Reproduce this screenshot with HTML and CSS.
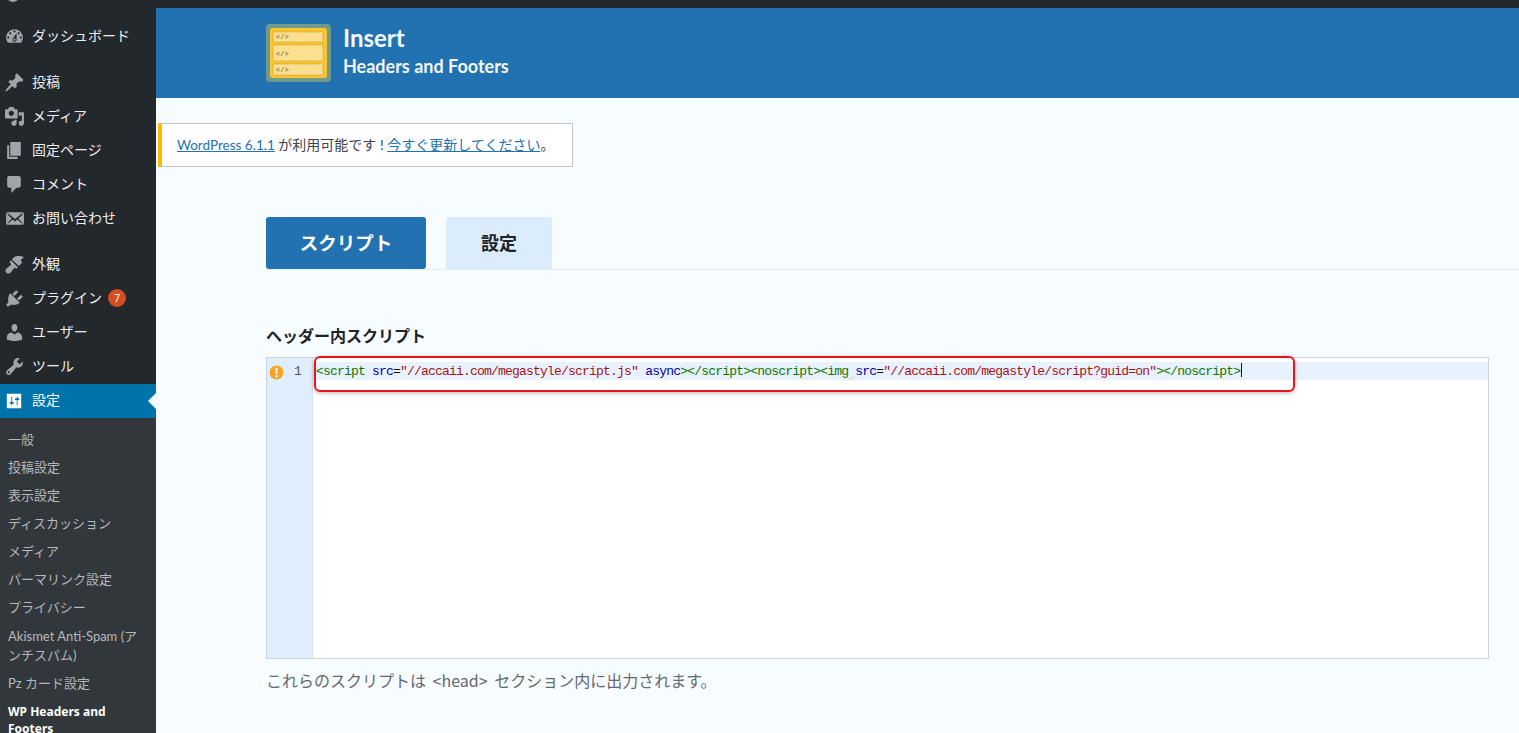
FILE: index.html
```html
<!DOCTYPE html>
<html lang="ja">
<head>
<meta charset="utf-8">
<title>Insert Headers and Footers</title>
<link rel="stylesheet" href="styles.css">
</head>
<body>
<div class="topbar"><span class="top-icon"></span></div>
<div class="shell">
  <nav class="sidebar">
    <ul class="menu first">
      <li class="item"><svg class="ico" viewBox="0 0 20 20"><path fill-rule="evenodd" d="M3.760 16h12.480c1.100-1.370 1.760-3.110 1.760-5 0-4.420-3.580-8-8-8s-8 3.580-8 8c0 1.890.66 3.630 1.760 5zM10 4c.55 0 1 .45 1 1s-.45 1-1 1-1-.45-1-1 .45-1 1-1zM6 6c.55 0 1 .45 1 1s-.45 1-1 1-1-.45-1-1 .45-1 1-1zm8 0c.55 0 1 .45 1 1s-.45 1-1 1-1-.45-1-1 .45-1 1-1zm-5.370 5.550L12 7v6c0 1.100-.9 2-2 2s-2-.9-2-2c0-.57.24-1.080.63-1.450zM4 10c.55 0 1 .45 1 1s-.45 1-1 1-1-.45-1-1 .45-1 1-1zm12 0c.55 0 1 .45 1 1s-.45 1-1 1-1-.45-1-1 .45-1 1-1zm-5 3c0-.55-.45-1-1-1s-1 .45-1 1 .45 1 1 1 1-.45 1-1z"/></svg><span>ダッシュボード</span></li>
    </ul>
    <ul class="menu">
      <li class="item"><svg class="ico" viewBox="0 0 20 20"><path d="M10.440 3.020l1.820-1.820 6.360 6.350-1.830 1.820c-1.050-.68-2.480-.57-3.410.36l-.75.75c-.92.93-1.040 2.350-.35 3.410l-1.830 1.820-2.410-2.410-2.800 2.790c-.42.42-3.380 2.710-3.800 2.290s1.860-3.390 2.280-3.810l2.790-2.790L4.100 9.360l1.830-1.820c1.050.69 2.480.57 3.400-.36l.75-.75c.93-.92 1.050-2.350.36-3.410z"/></svg><span>投稿</span></li>
      <li class="item"><svg class="ico" viewBox="0 0 20 20"><path d="M13 11V4c0-.55-.45-1-1-1h-1.670L9 1H5L3.670 3H2c-.55 0-1 .45-1 1v7c0 .55.45 1 1 1h10c.55 0 1-.45 1-1zM7 4.500c1.380 0 2.500 1.120 2.500 2.500S8.380 9.500 7 9.500 4.500 8.380 4.500 7 5.620 4.500 7 4.500zM14 6h5v10.500c0 1.380-1.120 2.500-2.500 2.500S14 17.880 14 16.500s1.120-2.500 2.500-2.500c.17 0 .34.020.5.050V9h-3V6zm-4 8.050V13h2v3.500c0 1.380-1.120 2.500-2.500 2.500S7 17.880 7 16.500 8.120 14 9.500 14c.17 0 .34.020.5.050z"/></svg><span>メディア</span></li>
      <li class="item"><svg class="ico" viewBox="0 0 20 20"><path d="M6 15V2h10v13H6zm-1 1h8v2H3V5h2v11z"/></svg><span>固定ページ</span></li>
      <li class="item"><svg class="ico" viewBox="0 0 20 20"><path d="M5 2h9c1.100 0 2 .9 2 2v7c0 1.100-.9 2-2 2h-2l-5 5v-5H5c-1.100 0-2-.9-2-2V4c0-1.100.9-2 2-2z"/></svg><span>コメント</span></li>
      <li class="item"><svg class="ico" viewBox="0 0 20 20"><path d="M19 14.500v-9c0-.83-.67-1.500-1.500-1.500H3.490c-.83 0-1.500.67-1.500 1.500v9c0 .83.67 1.500 1.500 1.500H17.500c.83 0 1.500-.67 1.500-1.500zm-1.310-9.110c.33.33.15.67-.03.84L13.600 9.950l3.900 4.060c.12.14.2.36.06.51-.13.16-.43.15-.56.050l-4.370-3.730-2.140 1.950-2.130-1.950-4.370 3.730c-.13.100-.43.110-.56-.050-.14-.15-.06-.37.06-.51l3.900-4.060-4.060-3.720c-.18-.17-.36-.51-.03-.84s.67-.17.95.070l6.240 5.040 6.250-5.040c.28-.24.62-.4.95-.07z"/></svg><span>お問い合わせ</span></li>
    </ul>
    <ul class="menu last">
      <li class="item"><svg class="ico" viewBox="0 0 20 20"><path d="M12.500 2c2.300-.3 4.800 0 6.500 1l-3 2.800 1.200 2.500-3 3.200L7.500 5.200 9 3.600C10 2.700 11.200 2.200 12.500 2z"/><path d="M6.700 6l6.600 6.600-1.600 1.500-1.600-1.200-3.600 4.700c-1 1.200-2.800 1.400-4 .5C1.100 17 1 15 2.200 14L7 10 5.200 7.600z"/></svg><span>外観</span></li>
      <li class="item"><svg class="ico" viewBox="0 0 20 20"><path d="M13.110 4.360L9.870 7.600 8 5.730l3.240-3.240c.35-.34 1.050-.2 1.560.32.52.51.66 1.210.31 1.550zm-8 1.770l.91-1.120 9.010 9.010-1.190.84c-.71.71-2.630 1.160-3.820 1.160H6.140L4.900 17.260c-.59.59-1.540.59-2.120 0-.59-.58-.59-1.530 0-2.120l1.240-1.240v-3.880c0-1.130.52-3.130 1.090-3.890zm7.260 3.970l3.240-3.240c.34-.35 1.040-.21 1.550.31.52.51.66 1.210.31 1.550l-3.240 3.250z"/></svg><span>プラグイン</span><b class="badge">7</b></li>
      <li class="item"><svg class="ico" viewBox="0 0 20 20"><path d="M10 9.250c-2.270 0-2.730-3.440-2.730-3.440C7 4.020 7.820 2 9.970 2c2.160 0 2.980 2.020 2.710 3.810 0 0-.41 3.440-2.680 3.440zm0 2.570L12.720 10c2.390 0 4.520 2.330 4.520 4.530v2.490s-3.650 1.130-7.240 1.130c-3.650 0-7.240-1.130-7.240-1.130v-2.490c0-2.250 1.940-4.480 4.470-4.480z"/></svg><span>ユーザー</span></li>
      <li class="item"><svg class="ico" viewBox="0 0 20 20"><path fill-rule="evenodd" d="M16.680 9.770c-1.340 1.340-3.300 1.670-4.950.99l-5.410 6.520c-.99.99-2.590.99-3.570 0-.99-.98-.99-2.580 0-3.570l6.520-5.420c-.68-1.650-.35-3.610.99-4.950 1.280-1.280 3.120-1.620 4.720-1.060l-2.890 2.890 2.820 2.820 2.860-2.870c.53 1.580.18 3.410-1.090 4.650zM3.810 16.210c.4.390 1.030.39 1.420 0 .4-.4.4-1.030 0-1.430-.39-.39-1.020-.39-1.420 0-.39.4-.39 1.030 0 1.430z"/></svg><span>ツール</span></li>
      <li class="item active"><svg class="ico" viewBox="0 0 20 20"><path fill-rule="evenodd" d="M18 18V2H2v16zM8 11h1c.55 0 1 .45 1 1s-.45 1-1 1H8v1.500c0 .28-.22.5-.5.5s-.5-.22-.5-.5V13H6c-.55 0-1-.45-1-1s.45-1 1-1h1V5.500c0-.28.22-.5.5-.5s.5.22.5.5V11zm5-2h-1c-.55 0-1-.45-1-1s.45-1 1-1h1V5.500c0-.28.22-.5.5-.5s.5.22.5.5V7h1c.55 0 1 .45 1 1s-.45 1-1 1h-1v5.500c0 .28-.22.5-.5.5s-.5-.22-.5-.5V9z"/></svg><span>設定</span></li>
    </ul>
    <ul class="submenu">
      <li>一般</li>
      <li>投稿設定</li>
      <li>表示設定</li>
      <li>ディスカッション</li>
      <li>メディア</li>
      <li>パーマリンク設定</li>
      <li>プライバシー</li>
      <li class="wrap">Akismet Anti-Spam (アンチスパム)</li>
      <li>Pz カード設定</li>
      <li class="current">WP Headers and Footers</li>
    </ul>
  </nav>
  <main class="main">
    <header class="banner">
      <svg class="logo" viewBox="0 0 65 58">
        <rect width="65" height="58" rx="4" fill="#6f9a8d"/>
        <rect x="4" y="4" width="57" height="50" rx="3" fill="#fbc52d"/>
        <g fill="#fde08f" stroke="#a08a40" stroke-width=".6" stroke-dasharray="1.500 1">
          <rect x="7" y="8" width="50" height="10" rx="1"/>
          <rect x="7" y="21" width="50" height="16" rx="1"/>
          <rect x="7" y="40" width="50" height="11" rx="1"/>
        </g>
        <g fill="#55524a" font-family="'Liberation Mono',monospace" font-size="7">
          <text x="10" y="15">&lt;/&gt;</text>
          <text x="10" y="31.500">&lt;/&gt;</text>
          <text x="10" y="47.500">&lt;/&gt;</text>
        </g>
      </svg>
      <div class="brand">
        <div class="brand-name">Insert</div>
        <div class="brand-sub">Headers and Footers</div>
      </div>
    </header>
    <div class="notice"><a class="ver" href="#">WordPress 6.1.1</a> が利用可能です ! <a href="#">今すぐ更新してください</a>。</div>
    <div class="tabs">
      <a class="tab on" href="#">スクリプト</a>
      <a class="tab" href="#">設定</a>
    </div>
    <section class="panel">
      <h2 class="label">ヘッダー内スクリプト</h2>
      <div class="editor">
        <div class="gutter">
          <svg class="warn" viewBox="0 0 16 16"><circle cx="8" cy="8" r="7.500" fill="#f5a623"/><path d="M6.900 3h2.200l-.3 6.500H7.200zM8 10.700a1.300 1.300 0 1 1 0 2.600 1.300 1.300 0 0 1 0-2.600z" fill="#fff"/></svg>
          <span class="ln">1</span>
        </div>
        <div class="code">
          <div class="line"><i class="t">&lt;script</i> <i class="a">src</i>=<i class="s">"//accaii.com/megastyle/script.js"</i> <i class="a">async</i><i class="t">&gt;&lt;/script&gt;&lt;noscript&gt;&lt;img</i><i class="sq"> </i><i class="a">src</i>=<i class="s">"//accaii.com/megastyle/script?guid=on"</i><i class="t">&gt;&lt;/noscript&gt;</i><span class="cursor"></span></div>
        </div>
        <div class="callout"></div>
      </div>
      <p class="help">これらのスクリプトは &lt;head&gt; セクション内に出力されます。</p>
    </section>
  </main>
</div>
</body>
</html>
```
FILE: styles.css
```css
* { box-sizing: border-box; }
html, body { height: 100%; }
body {
  margin: 0;
  height: 733px;
  overflow: hidden;
  display: flex;
  flex-direction: column;
  background: #f7fcff;
  font-family: "Noto Sans CJK JP", "Noto Sans", sans-serif;
  color: #3c434a;
}
ul { list-style: none; margin: 0; padding: 0; }
.topbar { height: 8px; flex: none; background: #23282d; overflow: hidden; position: relative; }
.top-icon {
  display: block;
  width: 12px;
  height: 12px;
  margin: -10px 0 0 7px;
  border-radius: 50%;
  background: #a0a5aa;
}
.shell { flex: 1; display: flex; min-height: 0; }
.sidebar { width: 156px; flex: none; background: #23282d; }
.menu { padding-bottom: 12px; }
.menu.first { padding-top: 11px; }
.menu.last { padding-bottom: 0; }
.item {
  height: 34px;
  display: flex;
  align-items: center;
  position: relative;
  padding-left: 4px;
  gap: 7px;
  font-size: 14px;
  color: #eee;
}
.item span { margin-bottom: 2px; }
.ico { width: 21px; height: 21px; fill: #a0a5aa; flex: none; }
.item.active { margin-top: 1px; background: #0073aa; color: #fff; padding-left: 5px; gap: 9px; }
.item.active span { margin-bottom: 4px; }
.item.active .ico { width: 18px; height: 18px; margin-bottom: 1px; fill: #fff; }
.item.active::after {
  content: "";
  position: absolute;
  right: 0;
  top: 9px;
  border: 8px solid transparent;
  border-right-color: #f7fcff;
  border-left-width: 0;
}
.badge {
  width: 18px;
  height: 18px;
  margin-left: -1px;
  border-radius: 50%;
  background: #d54e21;
  color: #fff;
  font: 400 10px/18px "Noto Sans", sans-serif;
  text-align: center;
}
.submenu {
  background: #32373c;
  padding: 7px 8px 0;
  color: #b4b9be;
  font-family: Lato, "Noto Sans CJK JP", sans-serif;
  font-size: 13px;
  line-height: 19px;
}
.submenu li { padding: 5px 0 4px; }
.submenu .wrap { margin-top: 1px; }
.submenu .current {
  margin-top: 1px;
  color: #fff;
  font-weight: 700;
  font-family: "Noto Sans", sans-serif;
  font-size: 12px;
  line-height: 17px;
}
.main { flex: 1; min-width: 0; }
.banner {
  height: 90px;
  background: #2271b1;
  display: flex;
  align-items: center;
  padding-left: 110px;
  gap: 12px;
}
.logo { width: 65px; height: 58px; flex: none; }
.brand { padding-bottom: 4px; color: #f2f8fd; font-family: Lato, sans-serif; font-weight: 700; }
.brand-name { font-size: 24px; line-height: 30px; font-weight: 700; }
.brand-sub { font-size: 18px; line-height: 26px; }
.notice {
  width: 415px;
  height: 44px;
  margin: 25px 0 0 2px;
  padding: 0 0 0 15px;
  background: #fff;
  border: 1px solid #c3c4c7;
  border-left: 4px solid #ffb900;
  font-family: Lato, "Noto Sans CJK JP", sans-serif;
  font-size: 14px;
  line-height: 42px;
  color: #3c434a;
}
.notice a { color: #2271b1; text-decoration: underline; }
.notice .ver { font-size: 13.500px; }
.tabs {
  margin: 50px 0 0 110px;
  display: flex;
  gap: 20px;
  border-bottom: 1px solid #e4edf3;
}
.tab {
  height: 52px;
  border-radius: 3px 3px 0 0;
  background: #dbecfc;
  color: #1d2327;
  font-size: 18px;
  font-weight: 700;
  line-height: 51px;
  width: 106px;
  text-align: center;
  text-decoration: none;
}
.tab.on { width: 160px; background: #2271b1; color: #fff; font-size: 18.500px; border-radius: 3px; }
.panel { padding: 52px 30px 0 110px; }
.label { margin: 0 0 9px; font-size: 16px; line-height: 26px; font-weight: 700; color: #1d2327; }
.editor {
  height: 302px;
  background: #fff;
  border: 1px solid #ccd4da;
  display: flex;
  position: relative;
}
.gutter {
  width: 46px;
  flex: none;
  background: #dfeefc;
  border-right: 1px solid #d8e4ee;
  display: flex;
  align-items: flex-start;
  padding: 6px 0 0 2px;
}
.warn { width: 15px; height: 15px; margin-top: 1px; flex: none; }
.ln { margin: 1px 0 0 10px; font: 13px/14px "Liberation Mono", monospace; color: #555; }
.code { flex: 1; padding-top: 4px; min-width: 0; }
.line {
  height: 18px;
  padding: 1px 0 0 3px;
  background: #e8f2ff;
  font: 13px/18px "Liberation Mono", monospace;
  letter-spacing: -.8px;
  white-space: pre;
  color: #111;
}
.line i { font-style: normal; }
.t { color: #117700; }
.a { color: #0000aa; }
.s { color: #aa1111; }
.sq { text-decoration: underline wavy #e8c98a 1px; }
.cursor { display: inline-block; width: 1px; height: 14px; margin-left: 1px; background: #111; vertical-align: -2px; }
.callout {
  position: absolute;
  left: 47px;
  top: -2px;
  width: 981px;
  height: 36px;
  border: 2px solid #e8141c;
  border-radius: 6px;
  box-shadow: 0 1px 4px rgba(0,0,0,.3);
}
.help { margin: 9px 0 0; font-size: 16px; line-height: 24px; word-spacing: 3px; color: #646970; }
```
